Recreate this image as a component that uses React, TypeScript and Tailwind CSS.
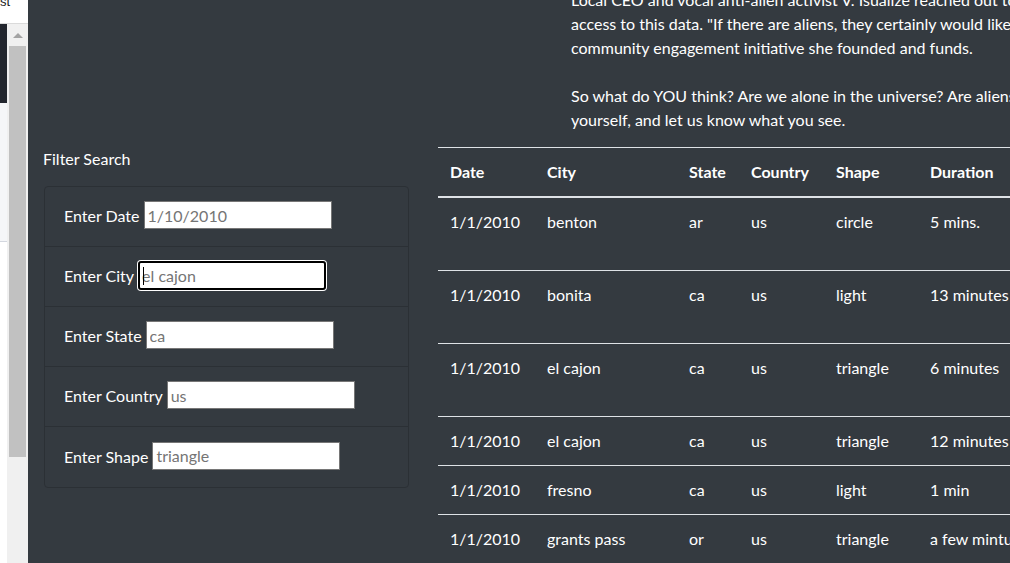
import React from 'react';

type Sighting = {
    date: string;
    city: string;
    state: string;
    country: string;
    shape: string;
    duration: string;
    tall?: boolean;
};

const sightings: Sighting[] = [
    { date: '1/1/2010', city: 'benton', state: 'ar', country: 'us', shape: 'circle', duration: '5 mins.', tall: true },
    { date: '1/1/2010', city: 'bonita', state: 'ca', country: 'us', shape: 'light', duration: '13 minutes', tall: true },
    { date: '1/1/2010', city: 'el cajon', state: 'ca', country: 'us', shape: 'triangle', duration: '6 minutes', tall: true },
    { date: '1/1/2010', city: 'el cajon', state: 'ca', country: 'us', shape: 'triangle', duration: '12 minutes' },
    { date: '1/1/2010', city: 'fresno', state: 'ca', country: 'us', shape: 'light', duration: '1 min' },
    { date: '1/1/2010', city: 'grants pass', state: 'or', country: 'us', shape: 'triangle', duration: 'a few mintues' },
];

const filters = [
    { label: 'Enter Date', placeholder: '1/10/2010' },
    { label: 'Enter City', placeholder: 'el cajon', focused: true },
    { label: 'Enter State', placeholder: 'ca' },
    { label: 'Enter Country', placeholder: 'us' },
    { label: 'Enter Shape', placeholder: 'triangle' },
];

const LeftStrip: React.FC = () => (
    <div className="w-[28px] shrink-0 flex flex-col bg-white">
        <div className="h-[24px] border-b border-[#dadada] overflow-hidden">
            <div className="-mt-[6px] text-[13px] leading-[16px] text-[#1c1c1c] font-['Liberation_Sans',sans-serif]">st</div>
        </div>
        <div className="flex flex-1">
            <div className="w-[7px] flex flex-col">
                <div className="h-[79px] bg-[#22262e]" />
                <div className="h-[139px] bg-[#f5f6f8] border-b border-[#d3d7df]" />
                <div className="flex-1 bg-white" />
            </div>
            <div className="w-[21px] bg-[#f0f0f0] flex flex-col items-center">
                <div className="mt-[9px] w-0 h-0 border-l-[5px] border-r-[5px] border-b-[5px] border-l-transparent border-r-transparent border-b-[#a3a3a3]" />
                <div className="mt-[8px] w-[17px] h-[411px] bg-[#c1c1c1]" />
            </div>
        </div>
    </div>
);

const FilterPanel: React.FC = () => (
    <aside className="w-[410px] shrink-0 pl-[16px]">
        <h5 className="leading-[24px] -ml-[1px]">Filter Search</h5>
        <div className="mt-[15px] w-[365px] border border-[#2b3035] rounded-[4px] divide-y divide-[#2b3035]">
            {filters.map((f) => (
                <div key={f.label} className="h-[60px] flex items-center pl-[19px] pb-[3px]">
                    <label className="mr-[4px] mt-[2px]">{f.label}</label>
                    {f.focused ? (
                        <div className="relative">
                            <input
                                placeholder={f.placeholder}
                                className="w-[188px] h-[29px] px-[2px] border-2 border-black rounded-[3px] bg-white ring-1 ring-white text-[16px] placeholder:text-[#757575] outline-none"
                            />
                            <span className="absolute left-[5px] top-[6px] w-[1px] h-[18px] bg-black" />
                        </div>
                    ) : (
                        <input
                            placeholder={f.placeholder}
                            className="w-[188px] h-[28px] px-[3px] border border-[#767676] bg-white text-[16px] placeholder:text-[#757575] outline-none"
                        />
                    )}
                </div>
            ))}
        </div>
    </aside>
);

const SightingsTable: React.FC = () => (
    <table className="w-[760px] shrink-0 table-fixed border-collapse text-left">
        <colgroup>
            <col className="w-[97px]" />
            <col className="w-[142px]" />
            <col className="w-[62px]" />
            <col className="w-[85px]" />
            <col className="w-[94px]" />
            <col className="w-[280px]" />
        </colgroup>
        <thead>
            <tr className="border-t border-[#dee2e6]">
                {['Date', 'City', 'State', 'Country', 'Shape', 'Duration'].map((h) => (
                    <th key={h} className="px-[12px] py-[12px] font-bold align-top border-b-2 border-[#dee2e6]">
                        {h}
                    </th>
                ))}
            </tr>
        </thead>
        <tbody>
            {sightings.map((s, i) => (
                <tr key={i} className={`border-t border-[#dee2e6] ${s.tall ? 'h-[73px]' : 'h-[49px]'}`}>
                    <td className="px-[12px] py-[12px] align-top">{s.date}</td>
                    <td className="px-[12px] py-[12px] align-top">{s.city}</td>
                    <td className="px-[12px] py-[12px] align-top">{s.state}</td>
                    <td className="px-[12px] py-[12px] align-top">{s.country}</td>
                    <td className="px-[12px] py-[12px] align-top">{s.shape}</td>
                    <td className="px-[12px] py-[12px] align-top whitespace-nowrap">{s.duration}</td>
                </tr>
            ))}
        </tbody>
    </table>
);

const App: React.FC = () => {
    return (
        <div className="flex w-[1010px] h-[563px] overflow-hidden font-['Lato',sans-serif] text-[16px] leading-[24px]">
            <LeftStrip />
            <main className="flex-1 min-w-0 bg-[#343a40] text-white overflow-hidden">
                <div className="ml-[543px] -mt-[12px] mb-[15px] whitespace-nowrap">
                    <div>Local CEO and vocal anti-alien activist V. Isualize reached out to us with this data set</div>
                    <div>access to this data. "If there are aliens, they certainly would like to know we are here,"</div>
                    <div>community engagement initiative she founded and funds.</div>
                    <div>&nbsp;</div>
                    <div>So what do YOU think? Are we alone in the universe? Are aliens out there? Take a look</div>
                    <div>yourself, and let us know what you see.</div>
                </div>
                <div className="flex">
                    <FilterPanel />
                    <SightingsTable />
                </div>
            </main>
        </div>
    );
};

export default App;
